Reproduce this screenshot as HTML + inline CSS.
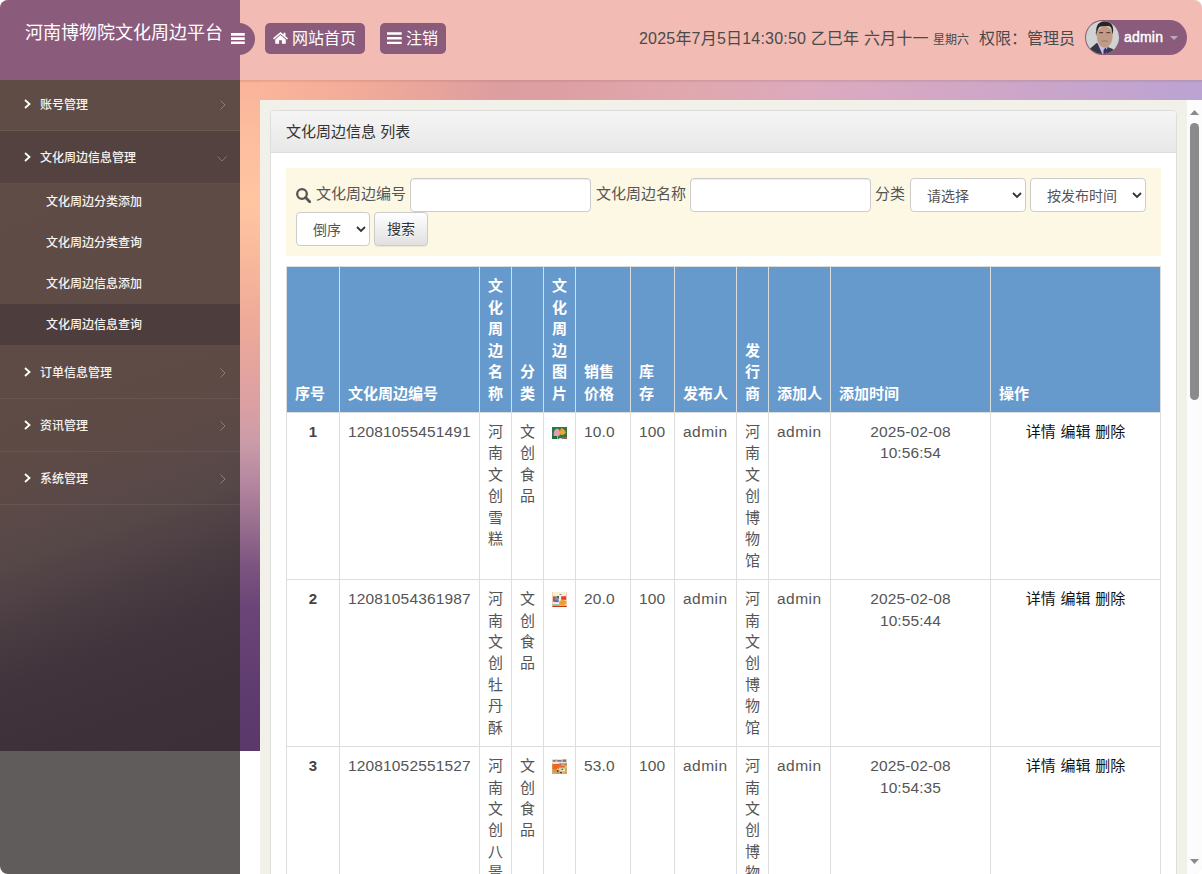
<!DOCTYPE html>
<html lang="zh-CN">
<head>
<meta charset="utf-8">
<title>河南博物院文化周边平台</title>
<style>
*{box-sizing:border-box;margin:0;padding:0}
html,body{width:1202px;height:874px;overflow:hidden;background:#fff}
body{position:relative;font-family:"Liberation Sans","Noto Sans CJK SC",sans-serif;font-size:15px;color:#555;line-height:1.42857}
#win{position:absolute;left:0;top:0;width:1202px;height:874px;overflow:hidden;border-radius:8px;background:#fff}
.abs{position:absolute}
/* page backdrop */
#grad-top{left:240px;top:80px;width:962px;height:20px;background:linear-gradient(90deg,#fab59b 0%,#fab59b 2%,#f2ab99 12.5%,#e8a49c 20%,#de9ea0 26%,#dd9fa3 33%,#e0a8ae 46%,#dcaabf 60%,#cda6c8 80%,#bba3d2 100%)}
#grad-left{left:240px;top:80px;width:20px;height:671px;background:linear-gradient(180deg,#f9b39a 0%,#fdbf9f 10%,#ffc5a1 19%,#f8b89c 27%,#f0ab99 34.8%,#dca0a2 47.8%,#cc9ca8 53.7%,#b688a0 59.7%,#9a7090 66%,#7c5480 72.4%,#6b4577 78.5%,#5f3c70 90.7%,#5a386a 100%)}
#hshadow{left:240px;top:80px;width:962px;height:3px;background:linear-gradient(180deg,rgba(120,60,40,.16),rgba(120,60,40,0))}
#below{left:0;top:751px;width:240px;height:123px;background:#605c5b}
/* header */
#header{left:0;top:0;width:1202px;height:80px;background:#f2bcb4}
#logo{left:0;top:0;width:240px;height:80px;background:#8b5b7c;color:#fff;font-size:18px;line-height:26px}
#logo span{position:absolute;left:25px;top:20px;white-space:nowrap}
#toggle{left:223px;top:23px;width:32px;height:32px;border-radius:16px;background:#8b5b7c}
.btn-h{top:23px;height:31px;border-radius:5px;background:#8b5b7c;color:#fff;font-size:16px;line-height:31px;white-space:nowrap}
.btn-h svg{position:absolute}
.btn-h span{position:absolute;top:0}
#clock{top:0;height:80px;color:#4a4a4a;font-size:16px;white-space:nowrap}
#clock span{position:absolute;white-space:nowrap}
#user{left:1085px;top:20px;width:102px;height:35px;border-radius:18px;background:#8b5b7c;color:#fff}
/* sidebar */
#side{left:0;top:80px;width:240px;height:671px;overflow:hidden;background:linear-gradient(160deg,#5f4c45 0%,#5e4b45 40%,#5d4a46 52.8%,#574848 63.4%,#4f4145 69.1%,#473a40 74.6%,#42343c 80%,#3e3039 90.8%,#3d2f38 100%)}
#side .it{position:absolute;left:0;width:240px;height:53px;border-bottom:1px solid rgba(255,255,255,.07);color:#f6f3f1;font-size:12px;font-weight:500}
#side .it.act{background:rgba(40,30,40,.2)}
#side .it span{position:absolute;left:40px;top:18px;line-height:18px;white-space:nowrap}
#side .it svg{position:absolute}
#side .sub{position:absolute;left:0;width:240px;height:41px;color:#f6f3f1;font-size:12px;font-weight:500}
#side .sub span{position:absolute;left:46px;top:12px;line-height:18px;white-space:nowrap}
#side .sub.act{background:rgba(40,30,40,.3)}
/* content */
#content{left:260px;top:100px;width:942px;height:774px;background:#f2f1e9;overflow:hidden}
#panel{left:10px;top:10px;width:907px;height:900px;background:#fff;border:1px solid #ddd;border-radius:4px}
#phead{left:0;top:0;width:905px;height:42px;background:linear-gradient(180deg,#f5f5f5,#e8e8e8);border-bottom:1px solid #ddd;border-radius:3px 3px 0 0;color:#333;font-size:15px}
#phead span{position:absolute;left:15px;top:10px;line-height:21px;white-space:nowrap}
#search{left:15px;top:57px;width:875px;height:88px;background:#fcf8e3;color:#555;font-size:15px}
#search .lb{position:absolute;top:15px;line-height:21px;white-space:nowrap}
.inp{position:absolute;height:34px;background:#fff;border:1px solid #ccc;border-radius:4px;box-shadow:inset 0 1px 1px rgba(0,0,0,.075)}
.sel{position:absolute;height:34px;background:#fff;border:1px solid #ccc;border-radius:4px;font-size:14px;color:#555}
.sel span{position:absolute;top:7px;line-height:20px;white-space:nowrap}
.sel svg{position:absolute;top:13px}
#sbtn{position:absolute;left:88px;top:44px;width:54px;height:34px;border:1px solid #ccc;border-radius:4px;background:linear-gradient(180deg,#fff,#e0e0e0);font-size:14px;color:#333;text-align:center;line-height:32px;box-shadow:inset 0 1px 0 rgba(255,255,255,.15),0 1px 1px rgba(0,0,0,.075);text-shadow:0 1px 0 #fff}
table{position:absolute;left:15px;top:155px;width:874px;border-collapse:collapse;table-layout:fixed;font-size:15px}
th,td{border:1px solid #ddd;padding:8px;vertical-align:top;text-align:left;line-height:21.43px;word-break:break-all}
th{background:#6699cc;color:#fff;font-weight:bold;vertical-align:bottom;height:146px}
td{height:167px;color:#555}
td.c,th.c{text-align:center}
td.n{font-size:15.5px;letter-spacing:.15px}
td.a{font-size:15.5px;letter-spacing:.45px;white-space:nowrap}
td.d{font-size:15.5px;letter-spacing:.1px}
td a{color:#111;text-decoration:none}
td.o{word-spacing:.6px}
td b{color:#444}
td svg{display:inline-block;vertical-align:baseline;position:relative;top:3px}
td svg.s{top:2px}
/* scrollbar */
#sb{left:1187px;top:100px;width:15px;height:774px;background:#fcfcfc}
#sb i{position:absolute;left:3px;top:23px;width:9px;height:277px;border-radius:5px;background:#8b8b8b}
#sb svg{position:absolute;left:3px}
</style>
</head>
<body>
<div id="win">
<div id="grad-top" class="abs"></div>
<div id="grad-left" class="abs"></div>
<div id="below" class="abs"></div>
<div id="hshadow" class="abs"></div>

<div id="header" class="abs"></div>
<div id="logo" class="abs"><span>河南博物院文化周边平台</span></div>
<div id="toggle" class="abs"><svg width="14" height="12" viewBox="0 0 14 12" style="position:absolute;left:8px;top:10px"><path d="M0 0h13.8v2.8H0zM0 4.2h13.8v2.8H0zM0 8.4h13.8v2.7H0z" fill="#fff"/></svg></div>
<div class="abs btn-h" style="left:265px;width:100px">
  <svg width="15" height="12.2" viewBox="0 0 16 13" preserveAspectRatio="none" style="left:7.8px;top:8.7px"><path d="M8 0L0 6.7l1 1.2L8 2.1l7 5.8 1-1.2-2.7-2.3V0.8h-2v1.9zM2.4 7.9V12.6h4.1V8.9h3v3.7h4.1V7.9L8 3.3z" fill="#fff"/></svg>
  <span style="left:27px">网站首页</span>
</div>
<div class="abs btn-h" style="left:380px;width:66px">
  <svg width="15" height="12" viewBox="0 0 15 12" style="left:7px;top:9px"><path d="M0 0.2h14.7v2.5H0zM0 5h14.7v2.5H0zM0 9.7h14.7v2.3H0z" fill="#fff"/></svg>
  <span style="left:26px">注销</span>
</div>
<div id="clock" class="abs" style="left:0;width:1202px">
  <span style="left:639px;top:26.5px;line-height:24px;letter-spacing:.2px">2025年7月5日14:30:50 乙巳年 六月十一</span>
  <span style="left:933px;top:30.6px;line-height:18px;font-size:12px">星期六</span>
  <span style="left:979px;top:26.5px;line-height:24px">权限：管理员</span>
</div>
<div id="user" class="abs">
  <svg width="33" height="33" viewBox="0 0 33 33" style="position:absolute;left:1px;top:1px">
    <defs><clipPath id="av"><circle cx="16.5" cy="16.5" r="16.5"/></clipPath></defs>
    <g clip-path="url(#av)">
      <rect width="33" height="33" fill="#cfd3d2"/>
      <path d="M2 29.5L10.5 22l6 2 9 3.5 5 3V34H0z" fill="#343945"/>
      <path d="M11 21l2.5-1.5 8 6-1.5 8h-3.5z" fill="#c9c0e6"/>
      <path d="M17.5 29l2-2.5 2 3-2 4.5h-2z" fill="#3a3066"/>
      <g transform="translate(-1.6,-2.4) scale(1.1)"><path d="M11.5 17c0 5 3 9.5 7 9.5s6.5-4 7-9l.5-6-7-6-7 5z" fill="#c29b86"/>
      <path d="M10.2 13.5c-.6-1 .3-2 1.3-1.5v4c-.7-.5-1-1.5-1.3-2.5z" fill="#b58b78"/>
      <path d="M11 13.5C9.8 7 13 2.5 18.5 2.5c5 0 8.5 3.2 7.5 10l-.7 1.5c0-3.5-.8-6-2.3-7-3-.5-6.5-.5-9 .5-1.5 1.5-2.5 3.5-2.5 6.5z" fill="#2a2424"/>
      <path d="M13.5 12.2h3.5v1.1h-3.5zM20 12.2h3.5v1.1H20z" fill="#5a4036"/>
      <path d="M15.5 20.3c1.5-.9 4.5-.9 6 0v1c-2-.5-4-.5-6 0z" fill="#8f8079"/></g>
    </g>
  </svg>
  <span style="position:absolute;left:39px;top:8px;font-size:14px;font-weight:normal;-webkit-text-stroke:.45px #fff;line-height:18px;letter-spacing:.2px">admin</span>
  <svg width="8" height="4" viewBox="0 0 8 4" style="position:absolute;left:85px;top:16px"><path d="M0 0h8L4 4z" fill="#b9a9c4"/></svg>
</div>

<div id="side" class="abs">
  <div class="it" style="top:-2px"><svg width="7" height="10" viewBox="0 0 7 10" style="left:24px;top:21px"><path d="M1 1l4.5 4L1 9" fill="none" stroke="#fff" stroke-width="1.8"/></svg><span>账号管理</span><svg width="6" height="10" viewBox="0 0 6 10" style="left:219.5px;top:21.5px"><path d="M.5.5l4.5 4.5-4.5 4.5" fill="none" stroke="#8d7d78" stroke-width="1"/></svg></div>
  <div class="it act" style="top:51px"><svg width="7" height="10" viewBox="0 0 7 10" style="left:24px;top:21px"><path d="M1 1l4.5 4L1 9" fill="none" stroke="#fff" stroke-width="1.8"/></svg><span>文化周边信息管理</span><svg width="10" height="6" viewBox="0 0 10 6" style="left:216.5px;top:24.5px"><path d="M.5.5l4.5 4.5 4.5-4.5" fill="none" stroke="#83746f" stroke-width="1"/></svg></div>
  <div class="sub" style="top:101px"><span>文化周边分类添加</span></div>
  <div class="sub" style="top:142px"><span>文化周边分类查询</span></div>
  <div class="sub" style="top:183px"><span>文化周边信息添加</span></div>
  <div class="sub act" style="top:224px"><span>文化周边信息查询</span></div>
  <div class="it" style="top:266px"><svg width="7" height="10" viewBox="0 0 7 10" style="left:24px;top:21px"><path d="M1 1l4.5 4L1 9" fill="none" stroke="#fff" stroke-width="1.8"/></svg><span>订单信息管理</span><svg width="6" height="10" viewBox="0 0 6 10" style="left:219.5px;top:21.5px"><path d="M.5.5l4.5 4.5-4.5 4.5" fill="none" stroke="#8d7d78" stroke-width="1"/></svg></div>
  <div class="it" style="top:319px"><svg width="7" height="10" viewBox="0 0 7 10" style="left:24px;top:21px"><path d="M1 1l4.5 4L1 9" fill="none" stroke="#fff" stroke-width="1.8"/></svg><span>资讯管理</span><svg width="6" height="10" viewBox="0 0 6 10" style="left:219.5px;top:21.5px"><path d="M.5.5l4.5 4.5-4.5 4.5" fill="none" stroke="#8d7d78" stroke-width="1"/></svg></div>
  <div class="it" style="top:372px"><svg width="7" height="10" viewBox="0 0 7 10" style="left:24px;top:21px"><path d="M1 1l4.5 4L1 9" fill="none" stroke="#fff" stroke-width="1.8"/></svg><span>系统管理</span><svg width="6" height="10" viewBox="0 0 6 10" style="left:219.5px;top:21.5px"><path d="M.5.5l4.5 4.5-4.5 4.5" fill="none" stroke="#8d7d78" stroke-width="1"/></svg></div>
</div>

<div id="content" class="abs">
 <div id="panel" class="abs">
  <div id="phead" class="abs"><span>文化周边信息 列表</span></div>
  <div id="search" class="abs">
    <svg width="15" height="15" viewBox="0 0 15 15" style="position:absolute;left:10px;top:19.5px"><circle cx="6" cy="6" r="4.8" fill="none" stroke="#555" stroke-width="2.3"/><path d="M9.6 9.6l4.1 4.1" stroke="#555" stroke-width="2.8" stroke-linecap="round"/></svg>
    <span class="lb" style="left:30px">文化周边编号</span>
    <div class="inp" style="left:124px;top:10px;width:181px"></div>
    <span class="lb" style="left:310px">文化周边名称</span>
    <div class="inp" style="left:404px;top:10px;width:181px"></div>
    <span class="lb" style="left:589px">分类</span>
    <div class="sel" style="left:624px;top:10px;width:116px"><span style="left:16px">请选择</span><svg width="10" height="7" viewBox="0 0 10 7" style="right:3px"><path d="M1 1l4 4 4-4" fill="none" stroke="#333" stroke-width="1.8"/></svg></div>
    <div class="sel" style="left:744px;top:10px;width:116px"><span style="left:16px">按发布时间</span><svg width="10" height="7" viewBox="0 0 10 7" style="right:3px"><path d="M1 1l4 4 4-4" fill="none" stroke="#333" stroke-width="1.8"/></svg></div>
    <div class="sel" style="left:10px;top:44px;width:74px"><span style="left:16px">倒序</span><svg width="10" height="7" viewBox="0 0 10 7" style="right:3px"><path d="M1 1l4 4 4-4" fill="none" stroke="#333" stroke-width="1.8"/></svg></div>
    <div id="sbtn">搜索</div>
  </div>
  <table>
   <colgroup><col style="width:53px"><col style="width:140px"><col style="width:32px"><col style="width:32px"><col style="width:32px"><col style="width:55px"><col style="width:44px"><col style="width:62px"><col style="width:32px"><col style="width:62px"><col style="width:160px"><col style="width:170px"></colgroup>
   <thead><tr>
    <th>序号</th><th>文化周边编号</th><th>文化周边名称</th><th>分类</th><th>文化周边图片</th><th>销售价格</th><th>库存</th><th>发布人</th><th>发行商</th><th>添加人</th><th>添加时间</th><th>操作</th>
   </tr></thead>
   <tbody>
    <tr><td class="c"><b>1</b></td><td class="n">12081055451491</td><td>河南文创雪糕</td><td>文创食品</td><td><svg class="s" width="15" height="12" viewBox="0 0 15 12"><rect width="15" height="12" fill="#2b7a3f"/><rect width="15" height="1" fill="#46695f"/><path d="M1.8 8.4c-.5-2.5.6-6.2 3.2-6.6 2.5-.3 3.2 2.8 3 5.2-.2 1.8-1.5 2.4-3 2.4s-2.9-.1-3.2-1z" fill="#e99bb3"/><path d="M8 6.5c-.4-2.5.5-5 1.8-5.5 1.5.5 3.5 2.5 4 4.5-.5 1.5-2 2.5-3.5 2.6-1.3 0-2.1-.6-2.3-1.6z" fill="#f0a234"/><rect x="0" y="9" width="5" height="3" fill="#1f6f3c"/><rect x="5" y="8.8" width="1" height="3.2" fill="#d9a86a"/><rect x="7" y="11" width="3" height="1" fill="#d5d0ea"/><rect x="12.5" y="9.8" width="2.5" height="2.2" fill="#b8523a"/><rect x="10" y="10.2" width="2.5" height="1.5" fill="#a0707a"/></svg></td><td class="n">10.0</td><td class="n">100</td><td class="a">admin</td><td>河南文创博物馆</td><td class="a">admin</td><td class="c d">2025-02-08<br>10:56:54</td><td class="c o"><a>详情</a> <a>编辑</a> <a>删除</a></td></tr>
    <tr><td class="c"><b>2</b></td><td class="n">12081054361987</td><td>河南文创牡丹酥</td><td>文创食品</td><td><svg width="15" height="15" viewBox="0 0 15 15"><rect width="15" height="15" fill="#f6e6d6"/><rect x="0.4" y="0.3" width="14.2" height="3.6" fill="#fbf0cc"/><rect x="7" y="1.5" width="7" height="2.2" fill="#f4efee"/><rect x="7.5" y="2" width="2" height="1" fill="#8e7f86"/><rect x="0.9" y="4.2" width="6" height="5.8" fill="#8d8c9f"/><rect x="1.2" y="5" width="1.5" height="4" fill="#b2414a"/><rect x="5" y="4" width="2" height="2" fill="#4f6b4a"/><rect x="2.5" y="8.4" width="3.5" height="1.7" fill="#3d6eaf"/><rect x="7" y="3.8" width="2" height="5" fill="#f1eeee"/><rect x="9.2" y="4.3" width="5" height="3.5" fill="#e9382a"/><path d="M7 11c0-1.8 1.8-3 3.8-3s3.5 1 3.5 2.6-1.5 2.7-3.5 2.7S7 12.5 7 11z" fill="#e6a22e"/><rect x="0.8" y="10.3" width="6" height="1.5" fill="#f3ece6"/><rect x="0.4" y="12" width="7.5" height="1.6" fill="#9cc4c4"/><rect x="0" y="13.7" width="15" height="1.3" fill="#c93a17"/><rect x="0" y="0" width=".5" height="15" fill="#f3b58f"/><rect x="14.5" y="0" width=".5" height="15" fill="#f3b58f"/></svg></td><td class="n">20.0</td><td class="n">100</td><td class="a">admin</td><td>河南文创博物馆</td><td class="a">admin</td><td class="c d">2025-02-08<br>10:55:44</td><td class="c o"><a>详情</a> <a>编辑</a> <a>删除</a></td></tr>
    <tr><td class="c"><b>3</b></td><td class="n">12081052551527</td><td>河南文创八景茶</td><td>文创食品</td><td><svg width="15" height="15" viewBox="0 0 15 15"><rect width="15" height="15" fill="#dca566"/><rect width="15" height="4.3" fill="#efe4dc"/><path d="M0.7 1h2.3v1.8H0.7zM3.5 .8l1.5 0-1 2h-1zM5.2 1h4.5v1.8H5.2zM10.5.4h3.8v2.5h-3.8z" fill="#8c7870"/><rect x="0.6" y="5" width="12.2" height="5.5" rx="1" fill="#ee6424"/><rect x="0.8" y="3.8" width="6" height="1" fill="#f6efe8"/><rect x="7.5" y="4.2" width="7.5" height="2.6" fill="#d9a35c"/><circle cx="8.3" cy="5.5" r="1" fill="#7a78b0"/><circle cx="13.7" cy="5.5" r="1" fill="#7a86b8"/><rect x="12.8" y="6.5" width="2.2" height="2.5" fill="#d8c060"/><rect x="7" y="8.6" width="6" height="3" fill="#d8d8a6"/><rect x="8.5" y="11.2" width="4.5" height="1" fill="#f3efe6"/><rect x="9.5" y="9.8" width="1.5" height="1.2" fill="#56503c"/><rect x="5" y="9.5" width="1.5" height="2" fill="#e8de5c"/><rect x="4.8" y="11" width="1.7" height="2.5" fill="#6a3f52"/><rect x="1.5" y="11" width="2" height="2" rx="1" fill="#8db23e"/><rect x="4.2" y="13.3" width="2" height="1.2" fill="#a9b85a"/><rect x="8" y="13" width="2" height="1.2" fill="#7a2f4a"/><rect x="10" y="13" width="1.5" height="1.2" fill="#e6d23c"/></svg></td><td class="n">53.0</td><td class="n">100</td><td class="a">admin</td><td>河南文创博物馆</td><td class="a">admin</td><td class="c d">2025-02-08<br>10:54:35</td><td class="c o"><a>详情</a> <a>编辑</a> <a>删除</a></td></tr>
   </tbody>
  </table>
 </div>
</div>
<div id="sb" class="abs">
  <svg width="9" height="5" viewBox="0 0 9 5" style="top:10px"><path d="M0 5h9L4.5 0z" fill="#8b8b8b"/></svg>
  <i></i>
  <svg width="9" height="5" viewBox="0 0 9 5" style="top:759px"><path d="M0 0h9L4.5 5z" fill="#8b8b8b"/></svg>
</div>
</div>
</body>
</html>
